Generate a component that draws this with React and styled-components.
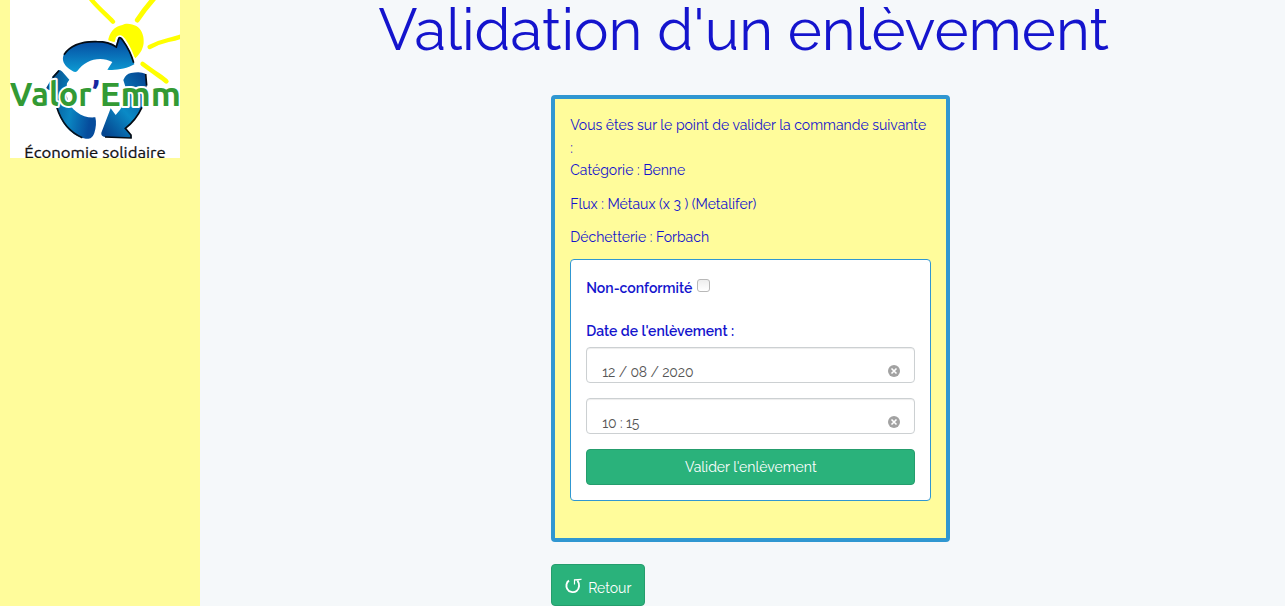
import React from "react";
import styled, { createGlobalStyle } from "styled-components";

const GlobalStyle = createGlobalStyle`
  *, *::before, *::after { box-sizing: border-box; }
  html, body, #root { height: 100%; }
  body {
    margin: 0;
    overflow: hidden;
    background: #f5f8fa;
    color: #1414cd;
    font-family: Raleway, Lato, "Open Sans", sans-serif;
    font-size: 14px;
    line-height: 22.4px;
  }
`;

const Page = styled.div`
  display: flex;
  height: 606px;
  overflow: hidden;
`;

const Sidebar = styled.aside`
  flex: 0 0 200px;
  padding: 0 10px;
  background: #fffc9b;
`;

const LogoImage = styled.svg`
  display: block;
  width: 170px;
  height: 158px;
  background: #fff;
`;

const Main = styled.main`
  flex: 1;
  display: flex;
  flex-direction: column;
  align-items: center;
`;

const Title = styled.h1`
  margin: 0 0 32px;
  padding-left: 2px;
  height: 63px;
  font-size: 58px;
  font-weight: 400;
  line-height: 60px;
  white-space: nowrap;
`;

const Column = styled.div`
  width: 399px;
  margin-left: 16.5px;
`;

const Panel = styled.section`
  height: 447px;
  padding: 15.3px 15px 15px;
  border: 4px solid #3097d1;
  border-radius: 4px;
  background: #fffc9b;
`;

const Line = styled.p`
  margin: 0 0 ${(p) => p.$gap ?? 11}px;
`;

const FormCard = styled.form`
  height: 242px;
  padding: 16px 15px 15px;
  border: 1px solid #3097d1;
  border-radius: 4px;
  background: #fff;
`;

const Label = styled.label`
  display: flex;
  align-items: center;
  height: 24px;
  font-weight: 600;
  margin-bottom: ${(p) => p.$gap ?? 0}px;
`;

const Checkbox = styled.input`
  appearance: none;
  width: 13px;
  height: 13px;
  margin: -6px 0 0 4.5px;
  border: 1px solid #b8b8b8;
  border-radius: 3px;
  background: linear-gradient(#eee, #fff);
`;

const Field = styled.div`
  display: flex;
  align-items: flex-start;
  justify-content: space-between;
  height: 36px;
  margin-bottom: 15px;
  padding: 12px 14px 0 15px;
  border: 1px solid #ccd0d2;
  border-radius: 4px;
  box-shadow: inset 0 1px 1px rgba(0, 0, 0, 0.075);
  color: #555;
  line-height: 24px;
  letter-spacing: -0.14px;
`;

const ClearIcon = styled.svg`
  width: 12px;
  height: 12px;
  margin-top: 5px;
`;

const Button = styled.button`
  display: flex;
  align-items: center;
  justify-content: center;
  width: ${(p) => p.$width};
  height: ${(p) => p.$height}px;
  padding: 0;
  border: 1px solid #259d6d;
  border-radius: 4px;
  background: #2ab27b;
  color: #fff;
  font: inherit;
`;

const BackRow = styled.div`
  margin-top: 22px;
`;

const BackArrow = styled.svg`
  width: 17px;
  height: 16px;
  margin: 1px 6px 0 0;
`;

const BackText = styled.span`
  margin-top: 6px;
`;

function Logo() {
  return (
    <LogoImage viewBox="30 0 510 474" preserveAspectRatio="none" role="img" aria-label="Valor'Emm">
      <defs>
        <linearGradient id="topBlue" x1="0" y1="0" x2="0" y2="1">
          <stop offset="0.1" stopColor="#064aa0" />
          <stop offset="1" stopColor="#0c9bd3" />
        </linearGradient>
        <linearGradient id="leftBlue" x1="0" y1="0" x2="1" y2="0.25">
          <stop offset="0" stopColor="#06407f" />
          <stop offset="0.6" stopColor="#0a86c2" />
          <stop offset="1" stopColor="#064c9c" />
        </linearGradient>
        <linearGradient id="rightBlue" x1="1" y1="0" x2="0.2" y2="1">
          <stop offset="0" stopColor="#04408e" />
          <stop offset="0.6" stopColor="#0a8ac6" />
          <stop offset="1" stopColor="#064790" />
        </linearGradient>
      </defs>
      <path d="M324 125C326 98 345 78 367 75C380 67 398 73 409 78C424 87 432 106 431 124C432 142 421 162 406 175L376 138L354 126Z" fill="#ff0" />
      <g stroke="#ff0" strokeLinecap="round" strokeLinejoin="round" fill="none">
        <path d="M272 -4C290 20 317 42 339 65" strokeWidth="13" />
        <path d="M463 -6Q433 28 412 60" strokeWidth="15" />
        <path d="M449 141Q478 126 505 120T544 109" strokeWidth="13" />
        <path d="M428 192Q455 212 474 225T499 244" strokeWidth="14" />
      </g>
      <path d="M190 167C201 140 250 121 290 123C320 123 337 131 347 139L354 115Q360 107 370 120C387 145 397 168 403 193C380 207 345 212 322 209L337 186C300 166 254 181 232 213Q225 220 214 211C198 201 184 185 190 167Z" fill="#fff" stroke="#fff" strokeWidth="13" />
      <path d="M190 167C201 140 250 121 290 123C320 123 337 131 347 139L354 115Q360 107 370 120C387 145 397 168 403 193C380 207 345 212 322 209L337 186C300 166 254 181 232 213Q225 220 214 211C198 201 184 185 190 167Z" fill="url(#topBlue)" />
      <path d="M192 164C212 134 252 124 290 125C319 125 336 132 349 141L357 114Q361 110 369 122C386 145 396 170 401 188" fill="none" stroke="#050b13" strokeWidth="5" />
      <path d="M138 265L158 230L175 211Q180 207 187 215L208 239L201 250C195 285 204 319 229 335C248 350 267 354 286 352Q291 373 283 399C275 421 260 419 240 411C196 393 168 346 163 276L142 268Z" fill="url(#leftBlue)" />
      <path d="M158 233L177 212M170 321C184 366 211 398 247 413" fill="none" stroke="#06111d" strokeWidth="5" />
      <path d="M370 240Q377 222 393 219Q421 213 436 221L440 254C443 294 425 345 377 386L393 405L395 414L315 411Q302 408 304 398L332 325L347 345Q373 318 383 282Z" fill="url(#rightBlue)" />
      <path d="M437 222L440 257M427 320C414 348 395 371 376 385L393 405L393 414L315 411" fill="none" stroke="#050b13" strokeWidth="5" />
      <g fontFamily="Ubuntu, 'Noto Sans', sans-serif" fontWeight="700">
        <g fontSize="101" fill="#339a34" stroke="#fff" strokeWidth="12" strokeLinejoin="round" paintOrder="stroke">
          <text x="29" y="318" textLength="246" lengthAdjust="spacingAndGlyphs">Valor</text>
          <text x="299" y="318" textLength="244" lengthAdjust="spacingAndGlyphs">Emm</text>
        </g>
        <text x="276" y="318" fontSize="101" fill="#1628a0">’</text>
      </g>
      <text x="73" y="473" fill="#111" stroke="#111" strokeWidth="0.8" fontFamily="Ubuntu, 'Noto Sans', sans-serif" fontSize="47" textLength="424" lengthAdjust="spacingAndGlyphs">Économie solidaire</text>
    </LogoImage>
  );
}

function Clear() {
  return (
    <ClearIcon viewBox="0 0 12 12" aria-hidden="true">
      <circle cx="6" cy="6" r="6" fill="#a2a2a2" />
      <path d="M3.5 3.5l5 5M8.5 3.5l-5 5" stroke="#fff" strokeWidth="1.6" />
    </ClearIcon>
  );
}

export default function App() {
  return (
    <Page>
      <GlobalStyle />
      <Sidebar>
        <Logo />
      </Sidebar>
      <Main>
        <Title>Validation d'un enlèvement</Title>
        <Column>
          <Panel>
            <Line $gap={0}>Vous êtes sur le point de valider la commande suivante :</Line>
            <Line>Catégorie : Benne</Line>
            <Line>Flux : Métaux (x 3 ) (Metalifer)</Line>
            <Line>Déchetterie : Forbach</Line>
            <FormCard onSubmit={(e) => e.preventDefault()}>
              <Label $gap={19}>Non-conformité<Checkbox type="checkbox" /></Label>
              <Label $gap={4}>Date de l'enlèvement :</Label>
              <Field>12 / 08 / 2020<Clear /></Field>
              <Field>10 : 15<Clear /></Field>
              <Button $width="100%" $height={36}>Valider l'enlèvement</Button>
            </FormCard>
          </Panel>
          <BackRow>
            <Button type="button" $width="94px" $height={42}>
              <BackArrow viewBox="0 0 17 16" aria-hidden="true">
                <path d="M4 2.6C1.2 4.2 .8 8.2 2.2 10.8C3.8 14 8.6 15.2 11.6 12.9C14.6 10.6 14.8 6.2 12.6 2.8" fill="none" stroke="#fff" strokeWidth="1.9" />
                <path d="M8.9 1.3L16.6 .7V1.7L12.6 2.8L10.1 2.6V6.4H8.9Z" fill="#fff" />
              </BackArrow>
              <BackText>Retour</BackText>
            </Button>
          </BackRow>
        </Column>
      </Main>
    </Page>
  );
}
